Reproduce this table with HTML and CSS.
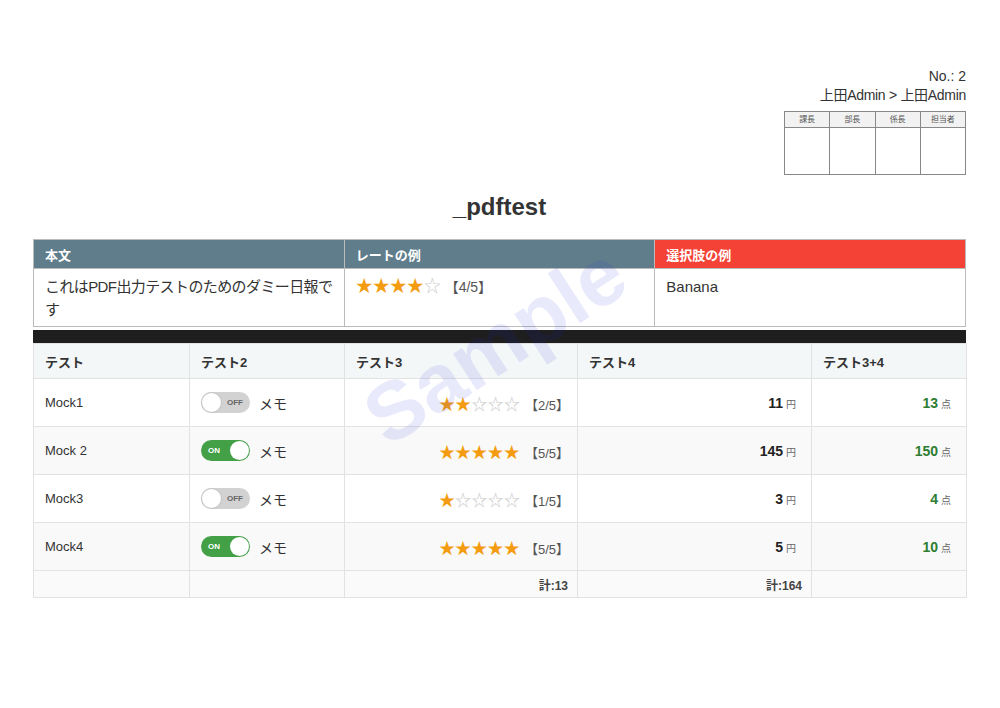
FILE: index.html
```html
<!DOCTYPE html>
<html lang="ja">
<head>
<meta charset="utf-8">
<title>_pdftest</title>
<link rel="stylesheet" href="styles.css">
</head>
<body>
<div class="page">
  <div class="meta">
    <div class="meta-line">No.: 2</div>
    <div class="meta-line tight">上田Admin &gt; 上田Admin</div>
    <table class="stamp">
      <tr><th>課長</th><th>部長</th><th>係長</th><th>担当者</th></tr>
      <tr><td></td><td></td><td></td><td></td></tr>
    </table>
  </div>

  <h1 class="title">_pdftest</h1>

  <table class="info">
    <colgroup><col class="c1"><col class="c1"><col class="c1"></colgroup>
    <tr>
      <th>本文</th>
      <th>レートの例</th>
      <th class="red">選択肢の例</th>
    </tr>
    <tr>
      <td class="body-text">これはPDF出力テストのためのダミー日報です</td>
      <td><span class="stars big"><span class="on">★★★★</span><span class="off">☆</span></span><span class="score big-score">【4/5】</span></td>
      <td>Banana</td>
    </tr>
  </table>

  <div class="bar"></div>

  <table class="grid">
    <colgroup>
      <col style="width:156px"><col style="width:155px"><col style="width:233px"><col style="width:234px"><col style="width:155px">
    </colgroup>
    <thead>
      <tr><th>テスト</th><th>テスト2</th><th>テスト3</th><th>テスト4</th><th>テスト3+4</th></tr>
    </thead>
    <tbody>
      <tr>
        <td>Mock1</td>
        <td><div class="memo"><span class="toggle off-t"><span class="lbl">OFF</span><span class="knob"></span></span>メモ</div></td>
        <td class="r rate"><span class="stars"><span class="on">★★</span><span class="off">☆☆☆</span></span><span class="score">【2/5】</span></td>
        <td class="r"><span class="num">11</span><span class="unit">円</span></td>
        <td class="r"><span class="num green">13</span><span class="unit">点</span></td>
      </tr>
      <tr class="alt">
        <td>Mock 2</td>
        <td><div class="memo"><span class="toggle on-t"><span class="lbl">ON</span><span class="knob"></span></span>メモ</div></td>
        <td class="r rate"><span class="stars"><span class="on">★★★★★</span></span><span class="score">【5/5】</span></td>
        <td class="r"><span class="num">145</span><span class="unit">円</span></td>
        <td class="r"><span class="num green">150</span><span class="unit">点</span></td>
      </tr>
      <tr>
        <td>Mock3</td>
        <td><div class="memo"><span class="toggle off-t"><span class="lbl">OFF</span><span class="knob"></span></span>メモ</div></td>
        <td class="r rate"><span class="stars"><span class="on">★</span><span class="off">☆☆☆☆</span></span><span class="score">【1/5】</span></td>
        <td class="r"><span class="num">3</span><span class="unit">円</span></td>
        <td class="r"><span class="num green">4</span><span class="unit">点</span></td>
      </tr>
      <tr class="alt">
        <td>Mock4</td>
        <td><div class="memo"><span class="toggle on-t"><span class="lbl">ON</span><span class="knob"></span></span>メモ</div></td>
        <td class="r rate"><span class="stars"><span class="on">★★★★★</span></span><span class="score">【5/5】</span></td>
        <td class="r"><span class="num">5</span><span class="unit">円</span></td>
        <td class="r"><span class="num green">10</span><span class="unit">点</span></td>
      </tr>
    </tbody>
    <tfoot>
      <tr><td></td><td></td><td class="r">計:13</td><td class="r">計:164</td><td></td></tr>
    </tfoot>
  </table>

  <div class="watermark">Sample</div>
</div>
</body>
</html>
```

FILE: styles.css
```css
html, body {
  margin: 0;
  padding: 0;
  background: #fff;
}
body {
  font-family: "Liberation Sans", "Noto Sans CJK JP", sans-serif;
  color: #333;
}
.page {
  position: relative;
  padding: 67px 34px 40px 33px;
}
.meta {
  display: flex;
  flex-direction: column;
  align-items: flex-end;
}
.meta-line {
  font-size: 14px;
  line-height: 19px;
  color: #333;
}
.meta-line.tight {
  letter-spacing: -0.3px;
}
.stamp {
  margin-top: 6px;
  border-collapse: collapse;
  width: 182px;
}
.stamp th, .stamp td {
  border: 1px solid #888;
  width: 45px;
  padding: 0;
}
.stamp th {
  height: 15px;
  font-size: 8px;
  font-weight: normal;
  color: #555;
  background: #f2f2f2;
  text-align: center;
  line-height: 15px;
}
.stamp td {
  height: 46px;
}
.title {
  margin: 18px 0 18px;
  text-align: center;
  font-size: 24px;
  line-height: 28px;
  font-weight: bold;
  color: #333;
}
.info {
  width: 100%;
  border-collapse: collapse;
  table-layout: fixed;
}
.info th, .info td {
  border: 1px solid #bbb;
  text-align: left;
  vertical-align: top;
}
.info th {
  background: #607d8b;
  color: #fff;
  font-size: 13px;
  font-weight: bold;
  height: 28px;
  padding: 0 11px;
  vertical-align: middle;
}
.info th.red {
  background: #f44336;
}
.info td {
  font-size: 15px;
  line-height: 23px;
  padding: 6px 11px 5px;
  height: 46px;
  color: #333;
}
.info td.body-text {
  padding-right: 6px;
  letter-spacing: -0.6px;
}
.stars {
  white-space: nowrap;
}
.stars .on { color: #f39c12; }
.stars .off { color: #ccc; }
.stars.big {
  font-size: 17px;
}
.score {
  margin-left: 6px;
  font-size: 13px;
  color: #555;
}
.score.big-score {
  font-size: 14px;
  margin-left: 4px;
}
.bar {
  margin-top: 3px;
  height: 13px;
  background: #1e1e1e;
}
.grid {
  width: 100%;
  border-collapse: collapse;
  table-layout: fixed;
}
.grid th, .grid td {
  border: 1px solid #e2e2e2;
  text-align: left;
  padding: 0 11px;
  font-size: 13px;
}
.grid th {
  background: #f4f7f8;
  height: 34px;
  font-weight: bold;
  color: #333;
}
.grid tbody td {
  height: 47px;
  color: #333;
}
.grid tbody tr.alt td {
  background: #f9f9f9;
}
.grid td.r {
  text-align: right;
  padding-right: 15px;
}
.grid td.rate {
  padding-right: 8px;
}
.grid tbody td .stars {
  font-size: 16px;
  letter-spacing: 0.2px;
}
.grid tbody td .score {
  margin-left: 5px;
}
.grid tfoot td {
  height: 26px;
  background: #fafafa;
  font-size: 12px;
  font-weight: bold;
  color: #444;
}
.grid tfoot td.r {
  padding-right: 9px;
}
.memo {
  display: flex;
  align-items: center;
  gap: 9px;
  font-size: 14px;
  color: #333;
}
.toggle {
  position: relative;
  display: inline-block;
  width: 49px;
  height: 21px;
  border-radius: 11px;
  box-sizing: border-box;
}
.toggle .knob {
  position: absolute;
  top: 1px;
  width: 19px;
  height: 19px;
  border-radius: 50%;
  background: #fff;
}
.toggle .lbl {
  position: absolute;
  top: 0;
  font-size: 8px;
  font-weight: bold;
  line-height: 21px;
}
.off-t {
  background: #d2d2d2;
}
.off-t .knob {
  left: 1px;
  box-shadow: 0 0 0 1px #c4c4c4;
}
.off-t .lbl {
  right: 7px;
  color: #666;
}
.on-t {
  background: #43a047;
}
.on-t .knob {
  right: 1px;
}
.on-t .lbl {
  left: 7px;
  color: #fff;
}
.num {
  font-size: 14px;
  font-weight: bold;
  color: #222;
}
.num.green {
  color: #2e7d32;
}
.unit {
  margin-left: 3px;
  font-size: 10px;
  color: #666;
}
.watermark {
  position: absolute;
  left: 335px;
  top: 295px;
  width: 320px;
  text-align: center;
  font-size: 82px;
  font-weight: bold;
  line-height: 100px;
  color: rgba(40, 40, 230, 0.1);
  transform: rotate(-33deg);
  pointer-events: none;
}
```
